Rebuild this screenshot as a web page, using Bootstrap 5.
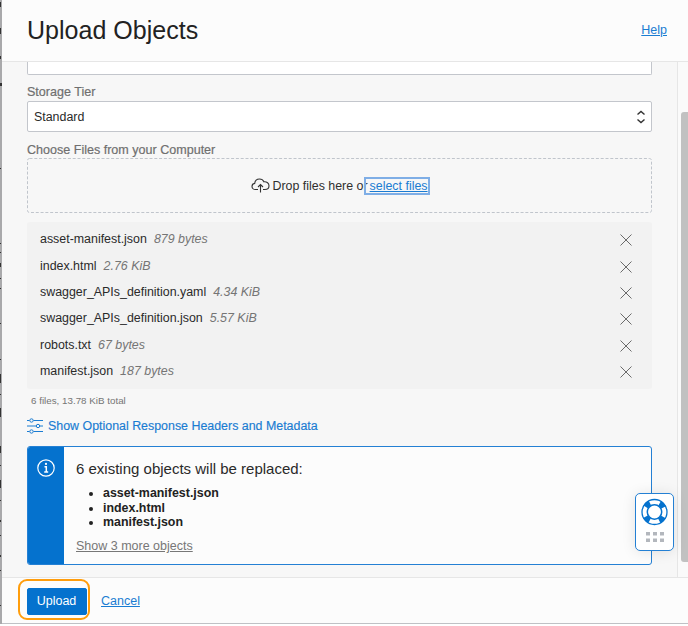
<!DOCTYPE html>
<html lang="en">
<head>
<meta charset="utf-8">
<meta name="viewport" content="width=device-width, initial-scale=1">
<title>Upload Objects</title>
<link href="https://cdn.jsdelivr.net/npm/bootstrap@5.3.0/dist/css/bootstrap.min.css" rel="stylesheet">
<style>
  :root { --brand: #0572ce; --line: #e6e6e6; --field: #c3c6cc; }
  body { font-family: "Liberation Sans", Arial, sans-serif; font-size: 12.42px; line-height: 16px; color: #2a2a2a; background: #fff; }
  a { color: #1a7cd2; }
  .screen { height: 624px; overflow: hidden; }
  .backdrop-edge { width: 2px; background: #a9a9ab; }
  .drawer { background: #f7f7f7; border-bottom: 1px solid #bfc1c5; min-width: 0; }
  .drawer-head { height: 62px; background: #fcfcfc; border-bottom: 1px solid var(--line); padding: 0 21px 2px 25px; }
  .drawer-head h1 { font-size: 25px; line-height: 30px; color: #222; letter-spacing: .02px; }
  .drawer-head a, .cancel, .more { font-size: 12.5px; }
  .drawer-foot { height: 46px; background: #fcfcfc; border-top: 1px solid var(--line); padding-left: 16px; }
  .form-area { padding: 0 25px 0 25px; }
  .cut-field { height: 13px; background: #fff; border: 1px solid var(--field); border-top: 0; border-radius: 0 0 2px 2px; }
  .field-label { color: #6f6f6f; font-size: 12.55px; line-height: 16px; -webkit-text-stroke: .2px #6f6f6f; }
  .tier-label { margin-top: 9px; }
  .tier { height: 31px; background: #fff; border: 1px solid var(--field); border-radius: 2px; padding: 1px 5px 0 6px; margin-top: 1px; }
  .files-label { margin-top: 10px; }
  .drop { height: 55px; color: #2f2f2f; }
  .drop-icon { margin-right: 2px; }
  .drop .picker { outline: 2px solid #7faee6; height: 14px; line-height: 14px; padding: 0 0 0 4px; margin-left: -2px; }
  .files { background: #f2f2f2; border-radius: 3px; height: 167px; padding: 4px 20px 5px 13px; margin-top: 9px; }
  .files li { height: 26.4px; }
  .files svg { margin-top: 2px; }
  .files em { color: #757575; margin-left: 7px; }
  .total { font-size: 9.8px; color: #757575; padding-left: 4px; line-height: 12px; margin-top: 6px; }
  .options { margin-top: 11px; height: 16px; }
  .options span { -webkit-text-stroke: .15px currentColor; }
  .notice { height: 119px; margin-top: 12px; border: 1px solid #2480d4; border-radius: 3px; background: #fcfcfc; }
  .notice-side { width: 36px; background: var(--brand); padding-top: 12px; }
  .notice-body { padding: 13px 0 0 12px; }
  .notice-title { font-size: 15px; line-height: 18px; }
  .notice ul { margin-top: 8px; padding-left: 27px; line-height: 14.7px; color: #222; }
  .more { display: inline-block; margin-top: 8px; color: #777; }
  .scroll { width: 11px; background: #fafafa; border-left: 1px solid var(--line); padding: 50px 0 15px 3px; }
  .thumb { background: #c1c1c1; border-radius: 3px 0 0 3px; }
  .ring { width: 72px; height: 41px; border: 2px solid #ff9d0c; border-radius: 9px; padding: 3px 0 0 5px; margin-bottom: 2px; }
  .upload { --bs-btn-bg: #0572ce; --bs-btn-border-color: #0572ce; --bs-btn-padding-x: 0; --bs-btn-padding-y: 0; --bs-btn-border-radius: 2px; --bs-btn-font-size: 12.5px; width: 60px; height: 27px; line-height: 25px; }
  .cancel { margin-left: 11px; }
  .help-widget { left: 635px; top: 493px; width: 39px; height: 58px; background: #fff; border: 1px solid #2480d4; border-radius: 5px; box-shadow: 0 1px 14px rgba(0,0,0,.1); }
  .grip { margin-top: 6px; }
</style>
</head>
<body>
<div class="screen d-flex">
  <div class="backdrop-edge flex-shrink-0">
    <svg class="d-block" width="2" height="624" fill="#333"><path d="M0 2h1v5H0zM0 28h1v6H0zM0 56h1v3H0zM0 83h2v3H0zM0 168h1v1H0zM0 243h1v1H0zM0 252h1v1H0zM0 263h1v4H0zM0 278h1v1H0zM0 288h1v1H0zM0 323h1v1H0zM0 359h1v1H0zM0 374h1v9H0zM0 394h1v1H0zM0 408h1v9H0zM0 446h1v7H0zM0 465h1v1H0zM0 480h1v8H0zM0 500h1v1H0zM0 520h1v2H0zM0 535h1v1H0zM0 555h1v2H0zM0 570h1v1H0zM0 605h1v1H0z"/></svg>
  </div>
  <main class="drawer flex-grow-1 d-flex flex-column">
    <header class="drawer-head d-flex align-items-center justify-content-between flex-shrink-0">
      <h1 class="fw-normal m-0">Upload Objects</h1>
      <a href="#">Help</a>
    </header>
    <div class="d-flex flex-grow-1">
      <div class="form-area flex-grow-1">
        <div class="cut-field"></div>
        <div class="field-label tier-label">Storage Tier</div>
        <div class="tier d-flex align-items-center justify-content-between">
          <span>Standard</span>
          <svg width="10" height="14" viewBox="0 0 10 14" fill="none" stroke="#333" stroke-width="1.4"><path d="M1.5 4.6 5 1.500l3.500 3.100M1.500 9.400 5 12.500l3.500-3.100"/></svg>
        </div>
        <div class="field-label files-label">Choose Files from your Computer</div>
        <div class="drop position-relative d-flex align-items-center justify-content-center">
          <svg class="position-absolute top-0 start-0" width="626" height="55" fill="none"><rect x=".5" y=".5" width="624" height="54" rx="2" stroke="#c0c5cc" stroke-dasharray="3 1.8"/></svg>
          <svg class="drop-icon" width="19" height="15" viewBox="0 0 19 15" fill="none" stroke="#333" stroke-width="1.1"><path d="M7 11.500H4.600C2.400 11.500 1 10.200 1 8.400c0-1.700 1.200-2.800 2.700-3C4 2.700 6 1 8.500 1c2 0 3.600 1 4.400 2.800 3-.3 5.100 1.400 5.100 3.900 0 2.300-1.700 3.800-4 3.800h-2M9.500 14.500v-8M7 9l2.500-2.500L12 9"/></svg>
          <span>Drop files here or</span><a class="picker position-relative" href="#">select files</a>
        </div>
        <ul class="files list-unstyled mb-0"></ul>
        <div class="total">6 files, 13.78 KiB total</div>
        <a class="options d-flex align-items-center text-decoration-none" href="#">
          <svg width="17" height="16" viewBox="0 0 17 16" fill="none" stroke="#1a7cd2" class="me-1"><path d="M0 2.500h2.500M6.500 2.500H16M0 8h9M13 8h3M0 13.500h2.500M6.500 13.500H16"/><circle cx="4.500" cy="2.500" r="1.700"/><circle cx="11" cy="8" r="1.700"/><circle cx="4.500" cy="13.500" r="1.700"/></svg>
          <span>Show Optional Response Headers and Metadata</span>
        </a>
        <section class="notice d-flex overflow-hidden">
          <div class="notice-side d-flex justify-content-center flex-shrink-0">
            <svg width="18" height="18" viewBox="0 0 18 18" fill="none" stroke="#fff"><circle cx="9" cy="9" r="8.200" stroke-width="1.200"/><path d="M7.500 7.700h1.800V13M7.200 13h4" stroke-width="1.500"/><circle cx="9" cy="4.900" r="1.100" fill="#fff" stroke="none"/></svg>
          </div>
          <div class="notice-body">
            <div class="notice-title">6 existing objects will be replaced:</div>
            <ul class="fw-bold mb-0"><li>asset-manifest.json</li><li>index.html</li><li>manifest.json</li></ul>
            <a class="more" href="#">Show 3 more objects</a>
          </div>
        </section>
      </div>
      <div class="scroll flex-shrink-0"><div class="thumb h-100"></div></div>
    </div>
    <footer class="drawer-foot d-flex align-items-center flex-shrink-0">
      <div class="ring d-flex align-items-center justify-content-center"><button class="btn btn-primary upload">Upload</button></div>
      <a class="cancel" href="#">Cancel</a>
    </footer>
  </main>
</div>
<aside class="help-widget position-absolute d-flex flex-column align-items-center">
  <svg class="mt-1 flex-shrink-0" width="27" height="28" viewBox="0 0 27 28" fill="none" stroke="#0572ce"><circle cx="13.500" cy="14" r="10" stroke-width="5.600" stroke-dasharray="5.600 10.108" stroke-dashoffset="-5.054"/><circle cx="13.500" cy="14" r="12.500" stroke-width="1.300"/><circle cx="13.500" cy="14" r="7.200" stroke-width="1.500"/></svg>
  <svg class="grip flex-shrink-0" width="18" height="10" viewBox="0 0 18 10" fill="#b3b7bd"><path d="M0 0h4v3.500H0zM7 0h4v3.500H7zM14 0h4v3.500h-4zM0 6.500h4V10H0zM7 6.500h4V10H7zM14 6.500h4V10h-4z"/></svg>
</aside>
<script>
  const list = document.querySelector('.files');
  [['asset-manifest.json', '879 bytes'], ['index.html', '2.76 KiB'], ['swagger_APIs_definition.yaml', '4.34 KiB'],
   ['swagger_APIs_definition.json', '5.57 KiB'], ['robots.txt', '67 bytes'], ['manifest.json', '187 bytes']].forEach(([name, size]) => {
    list.insertAdjacentHTML('beforeend', `<li class="d-flex align-items-center justify-content-between"><span>${name}<em>${size}</em></span>
      <svg width="12" height="12" viewBox="0 0 12 12" stroke="#6b6b6b" stroke-width="1"><path d="M.5.5l11 11M11.500.5l-11 11"/></svg></li>`);
  });
</script>
<script src="https://cdn.jsdelivr.net/npm/bootstrap@5.3.0/dist/js/bootstrap.bundle.min.js"></script>
</body>
</html>
